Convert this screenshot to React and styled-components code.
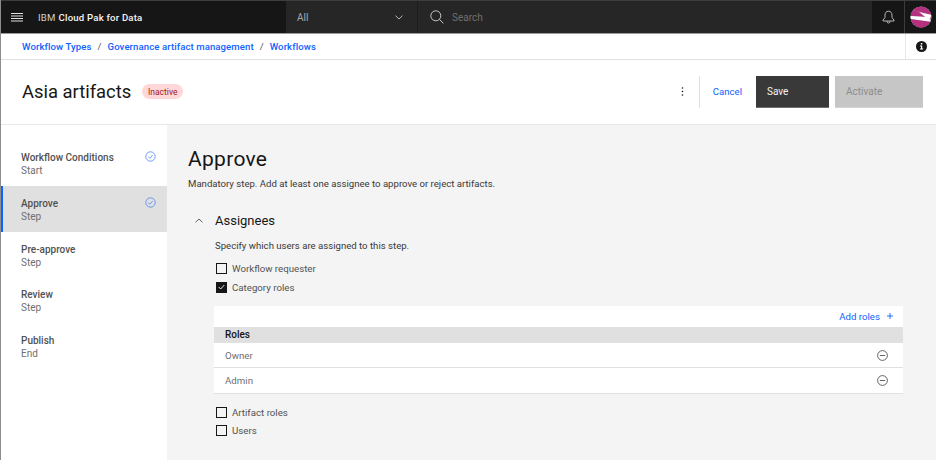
import React from "react";
import styled, { createGlobalStyle } from "styled-components";

const Global = createGlobalStyle`
  html, body { margin: 0; padding: 0; width: 936px; height: 460px; overflow: hidden; background: #fff; }
  * { box-sizing: border-box; }
  body { font-family: Roboto, "Liberation Sans", sans-serif; color: #161616; }
`;

const Page = styled.div`
  width: 936px; height: 460px; display: flex; flex-direction: column;
  border-left: 1px solid #8d8d8d; overflow: hidden;
`;
const Header = styled.header`
  height: 34px; flex: none; display: flex; background: #161616;
  border-top: 1px solid #3d3d3d; border-bottom: 1px solid #9a9a9a; margin-left: -1px;
`;
const Menu = styled.div`
  width: 33px; display: flex; align-items: center; justify-content: center; color: #e0e0e0;
`;
const Brand = styled.div`
  width: 253px; display: flex; align-items: center; padding-left: 5px;
  font-size: 9.6px; font-weight: 500; color: #f4f4f4; letter-spacing: .2px; white-space: nowrap;
  span { font-weight: 400; color: #d0d0d0; margin-right: 3px; }
`;
const Scope = styled.div`
  width: 132px; display: flex; align-items: center; justify-content: space-between;
  background: #262626; padding: 1px 14px 0 11px; font-size: 10px; color: #a8a8a8;
  border-right: 1px solid #1d1d1d;
`;
const Search = styled.div`
  flex: 1; display: flex; align-items: center; gap: 8px; background: #262626; padding-left: 12px;
  font-size: 10px; color: #6f6f6f;
`;
const Bell = styled.div`
  width: 33px; display: flex; align-items: center; justify-content: center; color: #c6c6c6;
  border-right: 1px solid #3d3d3d;
`;
const Avatar = styled.div`
  width: 31px; display: flex; align-items: center; justify-content: center;
`;
const Crumbs = styled.nav`
  height: 26px; flex: none; display: flex; align-items: stretch; justify-content: space-between;
  background: #fff; border-bottom: 1px solid #e0e0e0; padding-left: 21px;
`;
const CrumbList = styled.div`
  display: flex; align-items: center; gap: 6px; font-size: 9.6px; font-weight: 500; color: #0f62fe;
  letter-spacing: .08px; padding-bottom: 1px;
`;
const Slash = styled.span`
  color: #525252; font-weight: 400;
`;
const InfoCell = styled.div`
  width: 31px; border-left: 1px solid #e8e8e8; display: flex; align-items: center; justify-content: center;
`;
const TitleBar = styled.div`
  height: 65px; flex: none; display: flex; align-items: center; background: #fff;
  border-bottom: 1px solid #e8e8e8; padding: 0 13px 1px 21px;
`;
const Title = styled.h1`
  margin: 0; font-size: 18.4px; font-weight: 400; color: #161616;
`;
const Tag = styled.span`
  margin-left: 11px; height: 15px; width: 41px; border-radius: 8px; background: #ffd7d9; color: #a2191f;
  font-size: 8.5px; display: flex; align-items: center; justify-content: center;
`;
const Actions = styled.div`
  margin-left: auto; display: flex; align-items: center;
`;
const Overflow = styled.div`
  display: flex; color: #161616; margin-right: 15px;
`;
const Divider = styled.div`
  width: 1px; height: 32px; background: #e0e0e0; margin-right: 13px;
`;
const Cancel = styled.span`
  font-size: 9.6px; color: #0f62fe; margin-right: 14px;
`;
const Button = styled.div`
  height: 32px; width: ${p => p.$w}px; display: flex; align-items: center; padding-left: 11px; font-size: 10px;
  margin-left: ${p => p.$ml || 0}px;
  background: ${p => (p.$disabled ? "#c6c6c6" : "#393939")};
  color: ${p => (p.$disabled ? "#8d8d8d" : "#f4f4f4")};
  border-bottom: 1px solid ${p => (p.$disabled ? "#d6d6d6" : "#6f6f6f")};
`;
const Body = styled.div`
  flex: 1; display: flex; min-height: 0;
`;
const Sidebar = styled.aside`
  width: 166px; flex: none; background: #fff; padding-top: 15px;
`;
const Step = styled.div`
  height: 45.8px; display: flex; justify-content: space-between; padding: 11px 11px 0 ${p => (p.$active ? 18 : 20)}px;
  background: ${p => (p.$active ? "#e0e0e0" : "transparent")};
  border-left: ${p => (p.$active ? "2px solid #0f62fe" : "0")};
`;
const StepName = styled.div`
  font-size: 10px; font-weight: 500; color: #525252; line-height: 13px;
`;
const StepKind = styled.div`
  font-size: 10px; color: #6f6f6f; line-height: 13px;
`;
const Main = styled.main`
  flex: 1; background: #f4f4f4; padding: 21px 33px 0 21px; min-width: 0;
`;
const Heading = styled.h2`
  margin: 0; font-size: 21px; font-weight: 400; line-height: 26px; color: #161616; letter-spacing: .3px;
`;
const Lead = styled.p`
  margin: 5px 0 0; font-size: 9.6px; line-height: 13px; color: #393939;
`;
const SectionHead = styled.div`
  display: flex; align-items: center; margin-top: 21px; height: 18px;
`;
const Chevron = styled.div`
  width: 27px; display: flex; color: #525252; padding-left: 7px;
`;
const SectionTitle = styled.h3`
  margin: 0; font-size: 13px; font-weight: 400; color: #161616;
`;
const Section = styled.div`
  margin-left: 27px;
`;
const Help = styled.p`
  margin: 10px 0 0; font-size: 9.6px; line-height: 13px; color: #393939;
`;
const Checks = styled.div`
  display: flex; flex-direction: column; gap: 5px; margin-top: ${p => p.$mt}px;
`;
const Check = styled.label`
  display: flex; align-items: center; height: 13.4px; gap: 5px; font-size: 9.7px; color: #525252; padding-left: 1px;
`;
const Box = styled.span`
  width: 11px; height: 11px; display: flex; align-items: center; justify-content: center;
  border: 1px solid #161616; background: ${p => (p.$on ? "#161616" : "transparent")};
`;
const Table = styled.div`
  margin: 12px 0 0 -1px; width: 689px; background: #fff;
`;
const TableTools = styled.div`
  height: 21px; display: flex; align-items: center; justify-content: flex-end; gap: 7px; padding: 0 10px 0 0;
  font-size: 9.7px; color: #0f62fe;
`;
const TableHead = styled.div`
  height: 16px; background: #e0e0e0; padding-left: 11px; display: flex; align-items: center;
  font-size: 10px; font-weight: 500; color: #161616;
`;
const Row = styled.div`
  height: 25.4px; display: flex; align-items: center; justify-content: space-between; padding: 1px 15px 0 11px;
  font-size: 9.7px; color: #6f6f6f; border-bottom: 1px solid #e0e0e0;
`;

const Done = () => (
  <svg width="11" height="11" viewBox="0 0 11 11" fill="none" stroke="#4c85f5" strokeWidth=".8">
    <circle cx="5.5" cy="5.5" r="4.7" />
    <path d="M3.3 5.7 4.8 7.2 7.7 4" />
  </svg>
);
const Minus = () => (
  <svg width="11" height="11" viewBox="0 0 11 11" fill="none" stroke="#525252" strokeWidth=".9">
    <circle cx="5.5" cy="5.5" r="4.9" />
    <path d="M2.8 5.5h5.4" />
  </svg>
);

const steps = [
  ["Workflow Conditions", "Start", true],
  ["Approve", "Step", true, true],
  ["Pre-approve", "Step"],
  ["Review", "Step"],
  ["Publish", "End"],
];

export default function App() {
  return (
    <>
      <Global />
      <Page>
        <Header>
          <Menu>
            <svg width="12" height="9" viewBox="0 0 12 9" stroke="#e0e0e0" strokeWidth="1">
              <path d="M0 .5h12M0 3h12M0 5.5h12M0 8h12" />
            </svg>
          </Menu>
          <Brand><span>IBM</span>Cloud Pak for Data</Brand>
          <Scope>
            All
            <svg width="8" height="5" viewBox="0 0 8 5" fill="none" stroke="#c6c6c6" strokeWidth=".9">
              <path d="M.5.7 4 4 7.5.7" />
            </svg>
          </Scope>
          <Search>
            <svg width="14" height="14" viewBox="0 0 14 14" fill="none" stroke="#c6c6c6" strokeWidth="1">
              <circle cx="5.8" cy="5.8" r="5" />
              <path d="M9.4 9.4 13.4 13.4" />
            </svg>
            Search
          </Search>
          <Bell>
            <svg width="13" height="14" viewBox="0 0 13 14" fill="none" stroke="#c6c6c6" strokeWidth=".9">
              <path d="M6.5 1.2C4.2 1.2 3 3 3 5v2.6L1 10v1h11v-1L10 7.6V5c0-2-1.200-3.800-3.500-3.800ZM5 11v.5a1.500 1.500 0 0 0 3 0V11" />
            </svg>
          </Bell>
          <Avatar>
            <svg width="22" height="22" viewBox="0 0 22 22">
              <defs><clipPath id="av"><circle cx="11" cy="11" r="10.500" /></clipPath></defs>
              <g clipPath="url(#av)">
                <rect width="22" height="22" fill="#b0b0b0" />
                <path d="M4 1 14 0 21 6 22 9 2 4Z" fill="#b5317f" />
                <path d="M2 4 22 9 22 13 16 11 0 10Z" fill="#b5317f" />
                <path d="M9 6 22 9 19 14Z" fill="#fff" />
                <path d="M0 10 16 11 22 16 0 13Z" fill="#fff" />
                <path d="M0 13 22 16 13 24 4 22Z" fill="#b5317f" />
                <path d="M0 14 6 22H0Z" fill="#b0b0b0" />
                <path d="M16 21 22 15V22Z" fill="#b0b0b0" />
              </g>
            </svg>
          </Avatar>
        </Header>
        <Crumbs>
          <CrumbList>
            <span>Workflow Types</span><Slash>/</Slash>
            <span>Governance artifact management</span><Slash>/</Slash>
            <span>Workflows</span>
          </CrumbList>
          <InfoCell>
            <svg width="11" height="11" viewBox="0 0 11 11">
              <circle cx="5.500" cy="5.500" r="5.500" fill="#161616" />
              <rect x="4.800" y="2" width="1.500" height="1.500" fill="#fff" />
              <path d="M4 4.600h2.200v3H7.200v1H4v-1h1v-2H4Z" fill="#fff" />
            </svg>
          </InfoCell>
        </Crumbs>
        <TitleBar>
          <Title>Asia artifacts</Title>
          <Tag>Inactive</Tag>
          <Actions>
            <Overflow>
              <svg width="3" height="9" viewBox="0 0 3 9" fill="#161616">
                <circle cx="1.500" cy="1" r=".8" /><circle cx="1.500" cy="4.500" r=".8" /><circle cx="1.500" cy="8" r=".8" />
              </svg>
            </Overflow>
            <Divider />
            <Cancel>Cancel</Cancel>
            <Button $w={73}>Save</Button>
            <Button $w={88} $ml={6} $disabled>Activate</Button>
          </Actions>
        </TitleBar>
        <Body>
          <Sidebar>
            {steps.map(([name, kind, done, active]) => (
              <Step key={name} $active={active}>
                <div>
                  <StepName>{name}</StepName>
                  <StepKind>{kind}</StepKind>
                </div>
                {done && <Done />}
              </Step>
            ))}
          </Sidebar>
          <Main>
            <Heading>Approve</Heading>
            <Lead>Mandatory step. Add at least one assignee to approve or reject artifacts.</Lead>
            <SectionHead>
              <Chevron>
                <svg width="8" height="5" viewBox="0 0 8 5" fill="none" stroke="#525252" strokeWidth=".9">
                  <path d="M.5 4.300 4 1l3.500 3.300" />
                </svg>
              </Chevron>
              <SectionTitle>Assignees</SectionTitle>
            </SectionHead>
            <Section>
              <Help>Specify which users are assigned to this step.</Help>
              <Checks $mt={10}>
                <Check><Box />Workflow requester</Check>
                <Check>
                  <Box $on>
                    <svg width="7" height="6" viewBox="0 0 7 6" fill="none" stroke="#fff" strokeWidth=".9">
                      <path d="M.7 3 2.700 5 6.300 1" />
                    </svg>
                  </Box>
                  Category roles
                </Check>
              </Checks>
              <Table>
                <TableTools>
                  Add roles
                  <svg width="6" height="6" viewBox="0 0 6 6" stroke="#0f62fe" strokeWidth=".9">
                    <path d="M3 0v6M0 3h6" />
                  </svg>
                </TableTools>
                <TableHead>Roles</TableHead>
                <Row>Owner<Minus /></Row>
                <Row>Admin<Minus /></Row>
              </Table>
              <Checks $mt={12}>
                <Check><Box />Artifact roles</Check>
                <Check><Box />Users</Check>
              </Checks>
            </Section>
          </Main>
        </Body>
      </Page>
    </>
  );
}
